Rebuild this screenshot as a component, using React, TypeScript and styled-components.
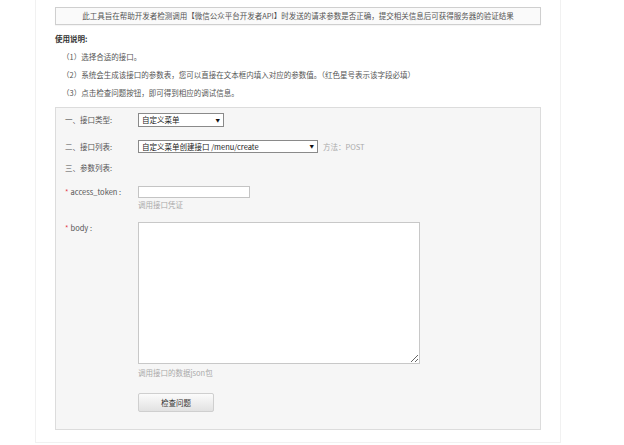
import React from "react";
import styled, { createGlobalStyle } from "styled-components";

const Global = createGlobalStyle`
  html, body { margin: 0; padding: 0; background: #fff; }
  body {
    font-family: "Noto Sans CJK SC", "Noto Sans", "Liberation Sans", sans-serif;
    color: #444;
    font-size: 7.5px;
  }
`;

const Page = styled.div`
  width: 526px;
  margin-left: 35px;
  padding: 7px 19px 12px 19px;
  box-sizing: border-box;
  border: 1px solid #f1f1f1;
  border-top: none;
`;

const Notice = styled.div`
  height: 16px;
  line-height: 16px;
  border: 1px solid #cfcfcf;
  background: #fafafa;
  text-align: center;
  color: #555;
  box-shadow: 0 1px 1px rgba(0, 0, 0, 0.04);
`;

const Heading = styled.div`
  margin-top: 5px;
  line-height: 18px;
  font-weight: bold;
  color: #333;
`;

const Steps = styled.ol`
  list-style: none;
  margin: 0;
  padding: 0 0 0 7px;
`;

const Step = styled.li`
  line-height: 18px;
  color: #555;
`;

const Panel = styled.div`
  margin-top: 5px;
  width: 486px;
  box-sizing: border-box;
  background: #f6f6f6;
  border: 1px solid #dcdcdc;
  padding: 5px 0 17px 9px;
  display: flex;
  flex-direction: column;
`;

const Row = styled.div<{ $gap: number; $top?: boolean }>`
  display: flex;
  align-items: ${(p) => (p.$top ? "flex-start" : "center")};
  margin-top: ${(p) => p.$gap}px;
  min-height: 12px;
`;

const Label = styled.div`
  width: 73px;
  flex: none;
  line-height: 12px;
  color: #555;
`;

const Star = styled.span`
  color: #e3404a;
  margin-right: 2px;
`;

const Field = styled.div`
  display: flex;
  flex-direction: column;
  align-items: flex-start;
`;

const SelectBox = styled.div<{ $w: number; $h: number }>`
  width: ${(p) => p.$w}px;
  height: ${(p) => p.$h}px;
  box-sizing: border-box;
  border: 1px solid #8a8a8a;
  background: #fff;
  display: flex;
  align-items: center;
  justify-content: space-between;
  padding: 0 3px 0 3px;
  color: #222;
  line-height: 1;
`;

const Arrow = styled.span`
  font-size: 4.5px;
  color: #111;
`;

const Method = styled.span`
  margin-left: 5px;
  color: #aaa;
`;

const TextInput = styled.input`
  width: 112px;
  height: 12px;
  box-sizing: border-box;
  border: 1px solid #c4c4c4;
  background: #fff;
  margin: 0;
  padding: 0 2px;
  font-size: 7.5px;
  outline: none;
`;

const Hint = styled.div<{ $gap: number }>`
  margin-top: ${(p) => p.$gap}px;
  line-height: 12px;
  color: #aaa;
`;

const TextArea = styled.textarea`
  width: 282px;
  height: 142px;
  box-sizing: border-box;
  border: 1px solid #c8c8c8;
  background: #fff;
  margin: 0;
  padding: 2px;
  font-size: 7.5px;
  outline: none;
  display: block;
`;

const Button = styled.button`
  margin-top: 14px;
  width: 76px;
  height: 19px;
  box-sizing: border-box;
  border: 1px solid #cfcfcf;
  border-radius: 2px;
  background: linear-gradient(#fbfbfb, #e2e2e2);
  font-family: inherit;
  font-size: 7.5px;
  color: #333;
  padding: 0;
  cursor: pointer;
`;

export default function App() {
  return (
    <>
      <Global />
      <Page>
        <Notice>
          此工具旨在帮助开发者检测调用【微信公众平台开发者API】时发送的请求参数是否正确，提交相关信息后可获得服务器的验证结果
        </Notice>
        <Heading>使用说明:</Heading>
        <Steps>
          <Step>（1）选择合适的接口。</Step>
          <Step>
            （2）系统会生成该接口的参数表，您可以直接在文本框内填入对应的参数值。（红色星号表示该字段必填）
          </Step>
          <Step>（3）点击检查问题按钮，即可得到相应的调试信息。</Step>
        </Steps>
        <Panel>
          <Row $gap={0}>
            <Label>一、接口类型:</Label>
            <SelectBox $w={86} $h={14}>
              <span>自定义菜单</span>
              <Arrow>▼</Arrow>
            </SelectBox>
          </Row>
          <Row $gap={13}>
            <Label>二、接口列表:</Label>
            <SelectBox $w={180} $h={13}>
              <span>自定义菜单创建接口 /menu/create</span>
              <Arrow>▼</Arrow>
            </SelectBox>
            <Method>方法：POST</Method>
          </Row>
          <Row $gap={9}>
            <Label>三、参数列表:</Label>
          </Row>
          <Row $gap={12} $top>
            <Label>
              <Star>*</Star>access_token :
            </Label>
            <Field>
              <TextInput />
              <Hint $gap={1}>调用接口凭证</Hint>
            </Field>
          </Row>
          <Row $gap={11} $top>
            <Label>
              <Star>*</Star>body :
            </Label>
            <Field>
              <TextArea />
              <Hint $gap={3}>调用接口的数据json包</Hint>
              <Button>检查问题</Button>
            </Field>
          </Row>
        </Panel>
      </Page>
    </>
  );
}
